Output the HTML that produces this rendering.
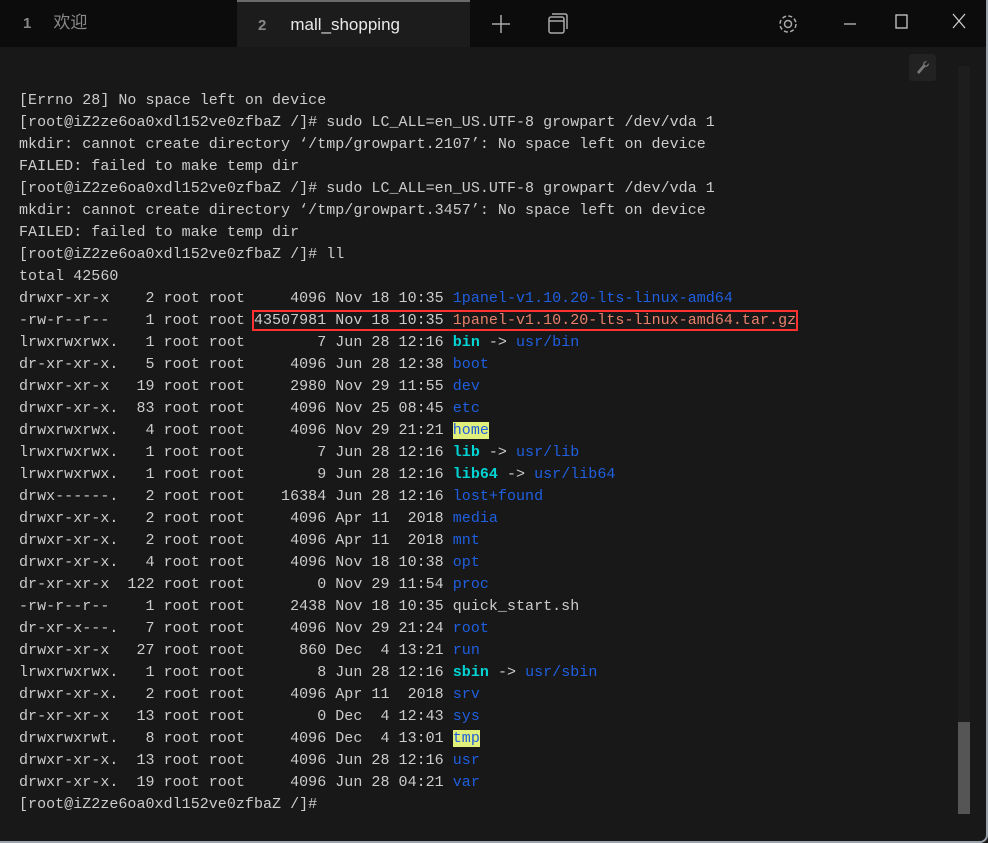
<!DOCTYPE html>
<html><head><meta charset="utf-8"><style>
html,body{margin:0;padding:0;background:#181818;width:988px;height:843px;overflow:hidden}
.win{position:absolute;left:0;top:0;width:986px;height:841px;background:#181818;border-right:2px solid #9aa3ad;border-bottom:2px solid #9aa3ad;border-radius:0 0 8px 0}
.bar{position:absolute;left:0;top:0;width:986px;height:47px;background:#0c0c0c}
.tab{position:absolute;top:0;height:47px;font:17px "Liberation Sans","Noto Sans CJK SC",sans-serif;color:#8a8a8a;line-height:46px}
.t2{left:237px;width:233px;background:#1c1c1c;border-top:2px solid #6a6a6a;box-sizing:border-box;color:#e8e8e8}
.num{font-weight:bold;font-size:15px;color:#888;margin-right:22px}
pre{position:absolute;left:19px;top:90px;margin:0;font:15px/22px "Liberation Mono",monospace;color:#cccccc;letter-spacing:0.035px}
.b{color:#1f5fe0}.c{color:#00d4d4;font-weight:bold}.h{background:#e0f07a;color:#1f5fe0}.r{color:#e8806a}
.box{outline:2px solid #ff3030;outline-offset:0px}
</style></head><body><div class="win">
<div class="bar">
<div class="tab" style="left:23px"><span class="num">1</span>欢迎</div>
<div class="tab t2"><span class="num" style="margin-left:21px;margin-right:24px">2</span>mall_shopping</div>
<svg style="position:absolute;left:490px;top:13px" width="22" height="22"><path d="M11 2V20M2 11H20" stroke="#aaa" stroke-width="1.5"/></svg>
<svg style="position:absolute;left:545px;top:12px" width="24" height="24"><rect x="4" y="5" width="15" height="16" rx="2" fill="none" stroke="#aaa" stroke-width="1.5"/><path d="M7 2H20Q22 2 22 4V17" fill="none" stroke="#aaa" stroke-width="1.5"/><path d="M4 9H19" stroke="#aaa" stroke-width="1.5"/></svg>
<svg style="position:absolute;left:776px;top:12px" width="24" height="24"><circle cx="12" cy="12" r="3.5" fill="none" stroke="#aaa" stroke-width="1.5"/><circle cx="12" cy="12" r="8" fill="none" stroke="#aaa" stroke-width="1.5" stroke-dasharray="4 2.3"/></svg>
<svg style="position:absolute;left:838px;top:12px" width="24" height="24"><path d="M6 12H18" stroke="#bbb" stroke-width="1.3"/></svg>
<svg style="position:absolute;left:890px;top:12px" width="24" height="24"><rect x="6" y="3" width="11" height="13" fill="none" stroke="#ccc" stroke-width="1.3"/></svg>
<svg style="position:absolute;left:947px;top:10px" width="24" height="24"><path d="M6 4L18 18M18 4L6 18" stroke="#ccc" stroke-width="1.3"/></svg>
</div>
<div style="position:absolute;left:909px;top:54px;width:27px;height:27px;background:#222;border-radius:3px"><svg width="27" height="27"><path d="M18 7L15 10L17 12L20 9Q20 13 16 13L10 20L8 18L14 11Q14 7 18 7Z" fill="#777"/></svg></div>
<div style="position:absolute;left:958px;top:66px;width:12px;height:748px;background:#1d1d1d"></div>
<div style="position:absolute;left:958px;top:722px;width:12px;height:92px;background:#555"></div>
<pre>[Errno 28] No space left on device
[root@iZ2ze6oa0xdl152ve0zfbaZ /]# sudo LC_ALL=en_US.UTF-8 growpart /dev/vda 1
mkdir: cannot create directory ‘/tmp/growpart.2107’: No space left on device
FAILED: failed to make temp dir
[root@iZ2ze6oa0xdl152ve0zfbaZ /]# sudo LC_ALL=en_US.UTF-8 growpart /dev/vda 1
mkdir: cannot create directory ‘/tmp/growpart.3457’: No space left on device
FAILED: failed to make temp dir
[root@iZ2ze6oa0xdl152ve0zfbaZ /]# ll
total 42560
drwxr-xr-x    2 root root     4096 Nov 18 10:35 <span class="b">1panel-v1.10.20-lts-linux-amd64</span>
-rw-r--r--    1 root root <span class="box">43507981 Nov 18 10:35 <span class="r">1panel-v1.10.20-lts-linux-amd64.tar.gz</span></span>
lrwxrwxrwx.   1 root root        7 Jun 28 12:16 <span class="c">bin</span> -&gt; <span class="b">usr/bin</span>
dr-xr-xr-x.   5 root root     4096 Jun 28 12:38 <span class="b">boot</span>
drwxr-xr-x   19 root root     2980 Nov 29 11:55 <span class="b">dev</span>
drwxr-xr-x.  83 root root     4096 Nov 25 08:45 <span class="b">etc</span>
drwxrwxrwx.   4 root root     4096 Nov 29 21:21 <span class="h">home</span>
lrwxrwxrwx.   1 root root        7 Jun 28 12:16 <span class="c">lib</span> -&gt; <span class="b">usr/lib</span>
lrwxrwxrwx.   1 root root        9 Jun 28 12:16 <span class="c">lib64</span> -&gt; <span class="b">usr/lib64</span>
drwx------.   2 root root    16384 Jun 28 12:16 <span class="b">lost+found</span>
drwxr-xr-x.   2 root root     4096 Apr 11  2018 <span class="b">media</span>
drwxr-xr-x.   2 root root     4096 Apr 11  2018 <span class="b">mnt</span>
drwxr-xr-x.   4 root root     4096 Nov 18 10:38 <span class="b">opt</span>
dr-xr-xr-x  122 root root        0 Nov 29 11:54 <span class="b">proc</span>
-rw-r--r--    1 root root     2438 Nov 18 10:35 quick_start.sh
dr-xr-x---.   7 root root     4096 Nov 29 21:24 <span class="b">root</span>
drwxr-xr-x   27 root root      860 Dec  4 13:21 <span class="b">run</span>
lrwxrwxrwx.   1 root root        8 Jun 28 12:16 <span class="c">sbin</span> -&gt; <span class="b">usr/sbin</span>
drwxr-xr-x.   2 root root     4096 Apr 11  2018 <span class="b">srv</span>
dr-xr-xr-x   13 root root        0 Dec  4 12:43 <span class="b">sys</span>
drwxrwxrwt.   8 root root     4096 Dec  4 13:01 <span class="h">tmp</span>
drwxr-xr-x.  13 root root     4096 Jun 28 12:16 <span class="b">usr</span>
drwxr-xr-x.  19 root root     4096 Jun 28 04:21 <span class="b">var</span>
[root@iZ2ze6oa0xdl152ve0zfbaZ /]#</pre>
</div></body></html>
